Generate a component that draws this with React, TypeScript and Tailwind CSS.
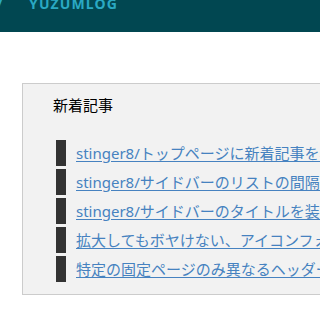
const posts = [
  "stinger8/トップページに新着記事を表示する方法",
  "stinger8/サイドバーのリストの間隔を調整する",
  "stinger8/サイドバーのタイトルを装飾する",
  "拡大してもボヤけない、アイコンフォントを使う",
  "特定の固定ページのみ異なるヘッダーを表示する",
];

export default function App() {
  return (
    <div
      className="h-[320px] w-[320px] overflow-hidden bg-white"
      style={{ fontFamily: '"Noto Sans", "Noto Sans CJK JP", sans-serif' }}
    >
      {/* Header */}
      <header className="relative h-[32px] bg-[#014751]">
        <span className="absolute left-[-3px] top-[-4px] text-[14px] font-bold leading-none text-[#2aa9c3]">/</span>
        <span className="absolute left-[29px] top-[-3px] text-[14px] font-bold leading-none tracking-[0.08em] text-[#2aa9c3]">
          YUZUMLOG
        </span>
      </header>

      {/* New posts widget */}
      <section className="ml-[22px] mt-[51px] w-[340px] border border-[#cccccc] bg-[#f2f2f2] pb-[12px] pl-[30px] pt-[10px]">
        <h3 className="text-[15px] leading-[22px] text-black">新着記事</h3>
        <ul className="mt-[24px] flex flex-col gap-[3px] pl-[3px]">
          {posts.map((t) => (
            <li key={t} className="flex h-[26px] items-center whitespace-nowrap">
              <span className="mr-[10px] h-[26px] w-[10px] shrink-0 bg-[#333333]" />
              <a href="#" className="text-[15px] leading-[26px] text-[#4682c0] underline underline-offset-2">
                {t}
              </a>
            </li>
          ))}
        </ul>
      </section>
    </div>
  );
}
